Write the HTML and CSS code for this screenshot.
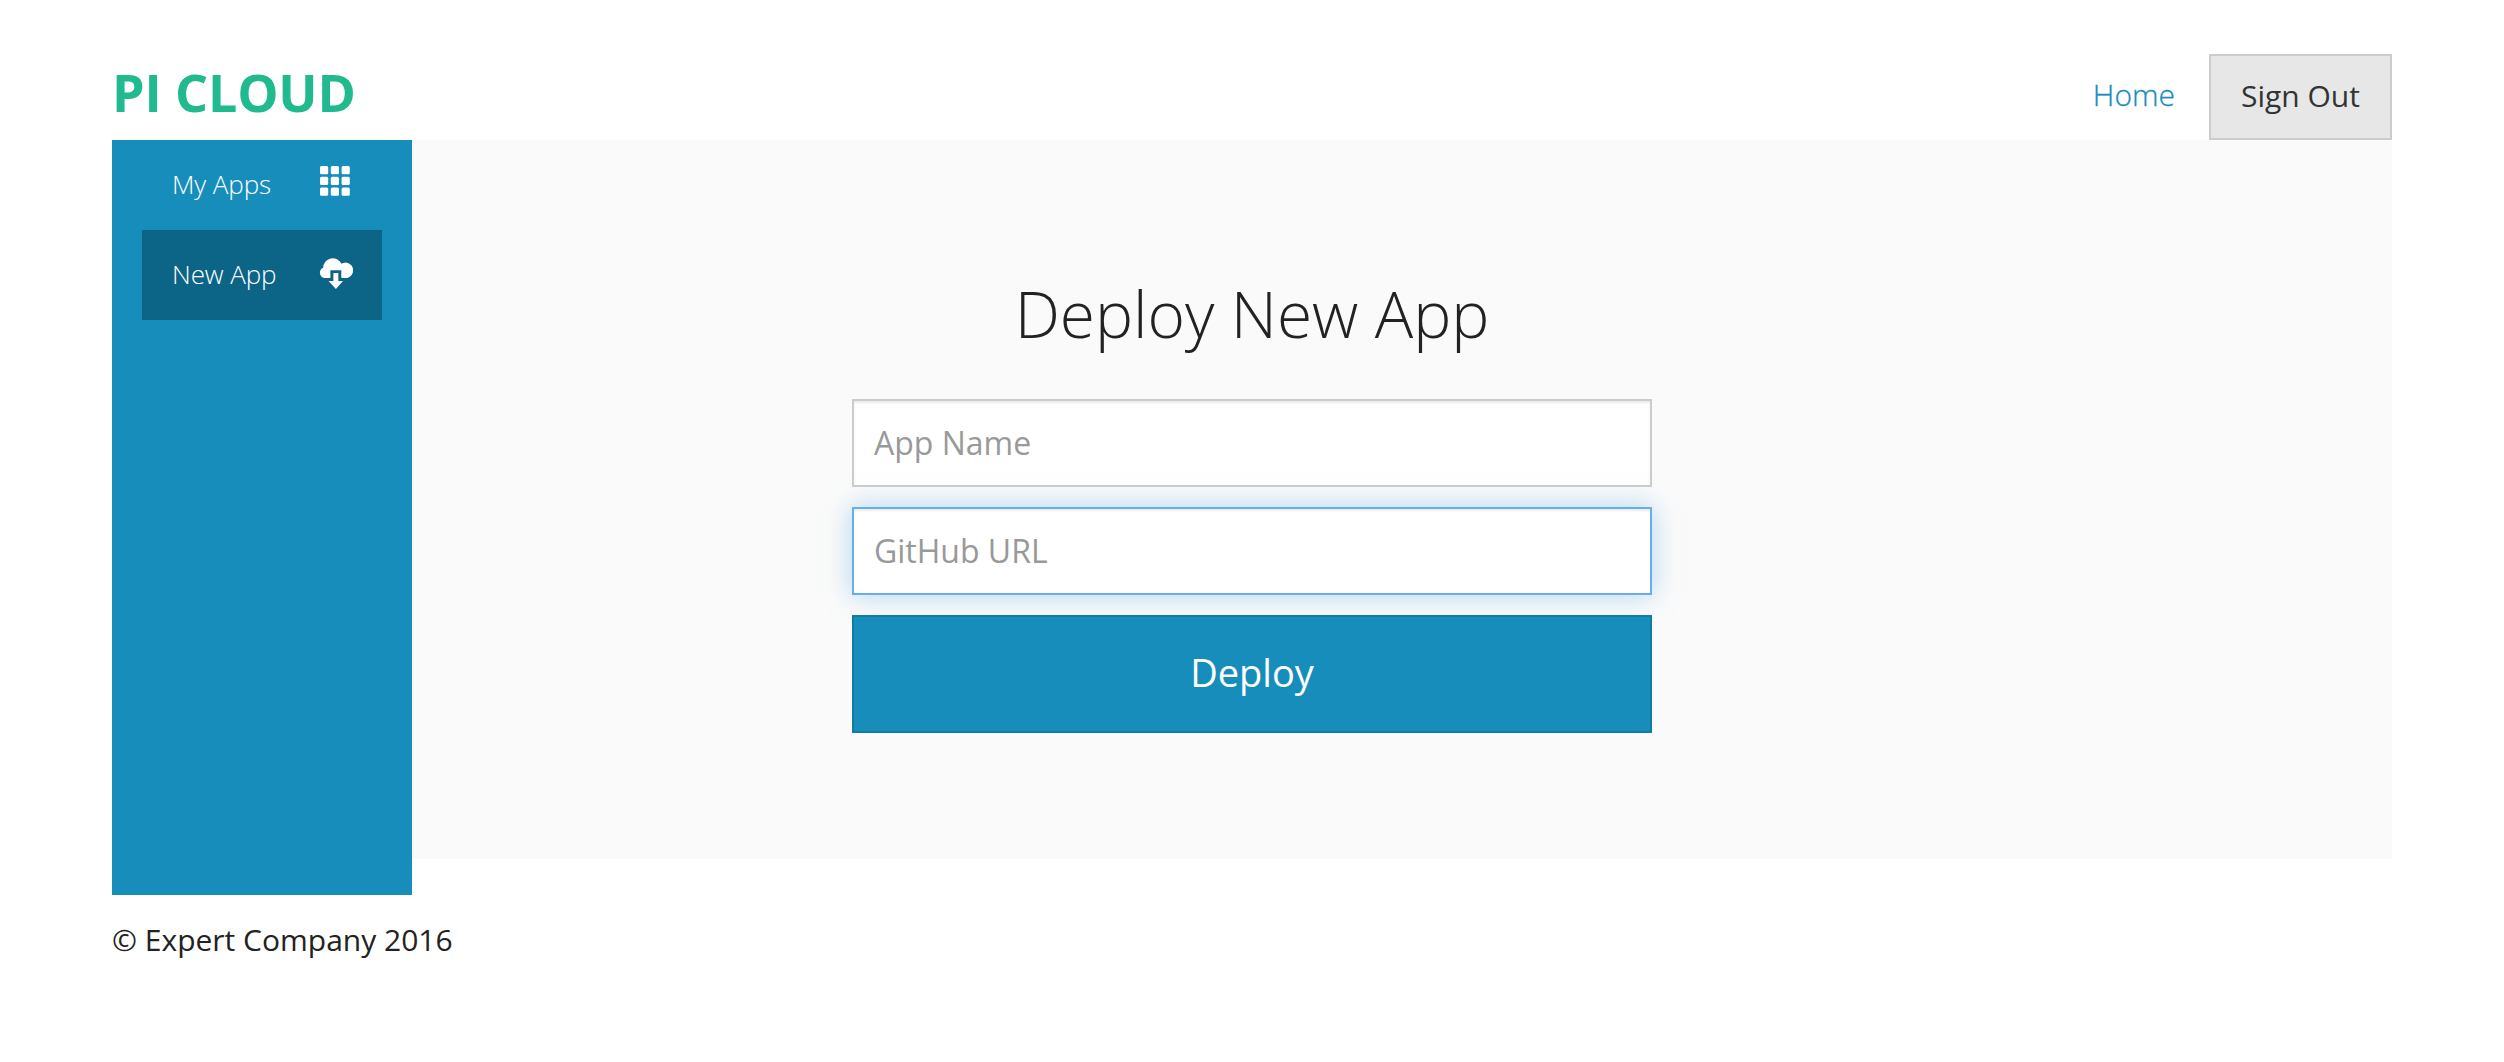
FILE: index.html
```
<!DOCTYPE html>
<html lang="en">
<head>
<meta charset="utf-8">
<title>Pi Cloud</title>
<link rel="stylesheet" href="styles.css">
</head>
<body>
<div class="page">
  <header class="top">
    <h1 class="brand">PI CLOUD</h1>
    <nav class="nav">
      <a class="home">Home</a>
      <a class="signout">Sign Out</a>
    </nav>
  </header>
  <div class="main">
    <aside class="sidebar">
      <a class="item"><span>My Apps</span>
        <svg class="icon grid" viewBox="0 0 30 30"><g id="row"><rect width="8.2" height="8.2" rx="1.5"/><rect x="10.8" width="8.2" height="8.2" rx="1.5"/><rect x="21.6" width="8.2" height="8.2" rx="1.5"/></g><use href="#row" y="10.8"/><use href="#row" y="21.6"/></svg>
      </a>
      <a class="item active"><span>New App</span>
        <svg class="icon cloud" viewBox="0 0 34 32"><path d="M5.500 21A5.400 5.400 0 0 1 4.200 10.700A9.600 9.600 0 0 1 22.500 6.700A7.700 7.700 0 1 1 26 21H22.300V13.200H11.400V21ZM14.400 16H19.300V24H24L16.900 32L9.600 24H14.400Z"/></svg>
      </a>
    </aside>
    <section class="content">
      <form class="form">
        <h2 class="title">Deploy New App</h2>
        <input class="field" type="text" placeholder="App Name">
        <input class="field focused" type="text" placeholder="GitHub URL">
        <button class="deploy" type="button">Deploy</button>
      </form>
    </section>
  </div>
  <footer class="footer">© Expert Company 2016</footer>
</div>
</body>
</html>
```
FILE: styles.css
```
* { box-sizing: border-box; }
body { margin: 0; background: #fff; color: #222; font-family: "Open Sans", sans-serif; }
.page { width: 2280px; margin-left: 112px; }
.top { height: 140px; padding-top: 54px; display: flex; justify-content: space-between; }
.brand { margin: 0; padding-top: 1px; color: #20ba8e; font-size: 52px; line-height: 74px; font-weight: 700; letter-spacing: -.15px; }
.nav { display: flex; align-items: flex-start; gap: 34px; font-size: 30px; }
.home { color: #168dba; line-height: 82px; font-weight: 300; -webkit-text-stroke: .3px #168dba; }
.signout { width: 183px; height: 86px; border: 2px solid #ccc; background: #e7e7e7; color: #333; line-height: 80px; text-align: center; }
.main { display: flex; align-items: flex-start; height: 755px; }
.sidebar { width: 300px; height: 755px; padding: 0 30px; background: #168dba; }
.item { display: flex; height: 90px; align-items: flex-start; justify-content: space-between; padding: 0 30px; color: #fff; font-size: 26px; line-height: 88px; font-weight: 300; letter-spacing: -.1px; }
.active { background: #0c6586; }
.icon { display: block; fill: #fff; }
.grid { width: 30px; height: 30px; margin: 26px 2px 0 0; }
.cloud { width: 34px; height: 32px; margin: 27px -1px 0 0; }
.content { flex: 1; height: 719px; padding: 130px 0 0 440px; background: #fafafa; }
.title { margin: 0 0 21px; font-size: 64px; line-height: 88px; font-weight: 300; text-align: center; letter-spacing: -.05px; }
.form { width: 800px; display: flex; flex-direction: column; gap: 20px; }
.field { height: 88px; padding: 0 20px 2px; border: 2px solid #ccc; box-shadow: inset 0 2px 2px rgba(0,0,0,.075); font: 32px "Open Sans", sans-serif; }
.field::placeholder { color: #999; }
.focused { border-color: #66afe9; box-shadow: inset 0 2px 2px rgba(0,0,0,.075), 0 0 24px rgba(102,175,233,.5); }
.deploy { height: 118px; padding: 0 0 4px; border: 2px solid #127ba3; background: #168dba; color: #fff; font: 38px "Open Sans", sans-serif; }
.footer { padding-top: 22px; font-size: 30px; line-height: 46px; }
```
